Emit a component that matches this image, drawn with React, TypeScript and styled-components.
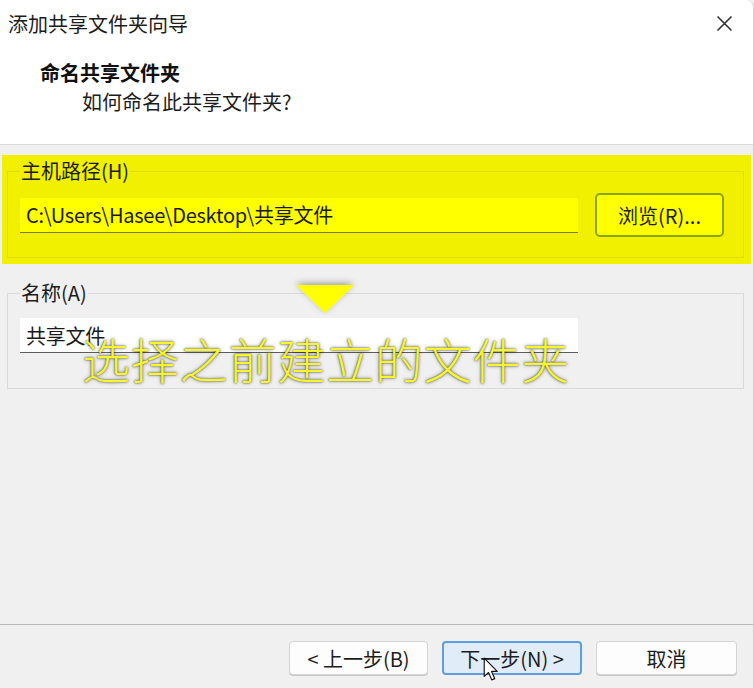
import React from "react";
import styled, { createGlobalStyle, css } from "styled-components";

const GlobalStyle = createGlobalStyle`
  html, body { margin: 0; padding: 0; background: #f0f0f0; }
  body {
    font-family: "Noto Sans CJK SC", "Noto Sans", sans-serif;
    color: #1a1a1a;
  }
  * { box-sizing: border-box; }
`;

const Window = styled.div`
  position: relative;
  width: 754px;
  height: 688px;
  display: flex;
  flex-direction: column;
  background: #f0f0f0;
  overflow: hidden;
  border-right: 1px solid #cfcfcf;
  border-top-right-radius: 8px;
`;

const Header = styled.header`
  height: 145px;
  background: #ffffff;
  border-bottom: 1px solid #dadada;
  display: flex;
  flex-direction: column;
`;

const TitleBar = styled.div`
  height: 46px;
  display: flex;
  align-items: center;
  justify-content: space-between;
  padding: 0 20px 0 8px;
  font-size: 20px;
  color: #1c1c1c;
`;

const CloseIcon = styled.svg`
  width: 17px;
  height: 17px;
  display: block;
`;

const Heading = styled.div`
  margin-top: 13px;
  padding-left: 40px;
  font-size: 20px;
  line-height: 28px;
  font-weight: 700;
  color: #111;
`;

const SubHeading = styled.div`
  margin-top: 1px;
  padding-left: 82px;
  font-size: 20px;
  line-height: 28px;
  color: #1c1c1c;
`;

const Body = styled.main`
  position: relative;
  flex: 1;
  display: flex;
  flex-direction: column;
  padding-top: 10px;
`;

const HighlightBand = styled.div`
  margin: 0 2px;
  padding: 4px 7px 6px 5px;
  background: #f0f000;
`;

const Group = styled.fieldset<{ $hl?: boolean; $bottom: number; $top: number }>`
  margin: 0;
  padding: ${(p) => p.$top}px 12px ${(p) => p.$bottom}px 12px;
  border: 1px solid ${(p) => (p.$hl ? "#dede00" : "#dadada")};
  min-width: 0;
`;

const PlainGroupWrap = styled.div`
  margin: 17px 9px 0 7px;
`;

const Legend = styled.legend`
  padding: 0 1px;
  margin-left: 0;
  font-size: 20px;
  line-height: 24px;
  color: #1c1c1c;
`;

const Row = styled.div`
  display: flex;
  align-items: center;
  gap: 17px;
`;

const TextField = styled.input<{ $hl?: boolean }>`
  width: 558px;
  height: 35px;
  padding: 0 6px;
  border: none;
  border-bottom: 1px solid ${(p) => (p.$hl ? "#7c7c30" : "#5c5c5c")};
  background: ${(p) => (p.$hl ? "#ffff00" : "#ffffff")};
  font-family: inherit;
  font-size: 20px;
  letter-spacing: -0.25px;
  color: #1a1a1a;
  outline: none;
`;

const BrowseButton = styled.button`
  width: 129px;
  height: 44px;
  border: 2px solid #8aa400;
  border-radius: 5px;
  background: #ffff00;
  font-family: inherit;
  font-size: 20px;
  color: #1c1c1c;
  padding: 0;
`;

const Footer = styled.footer`
  position: relative;
  height: 64px;
  border-top: 1px solid #b8b8b8;
  display: flex;
  justify-content: flex-end;
  align-items: flex-start;
  padding: 16px 16px 0 0;
  gap: 14px;
`;

const NavButton = styled.button<{ $w: number; $focus?: boolean }>`
  position: relative;
  width: ${(p) => p.$w}px;
  height: 34px;
  border-radius: 4px;
  font-family: inherit;
  font-size: 20px;
  color: #1c1c1c;
  padding: 0;
  border: 1px solid #d4d4d4;
  background: #fdfdfd;
  box-shadow: 0 1px 0 #c8c8c8;
  ${(p) =>
    p.$focus &&
    css`
      border: 2px solid #5c9ee0;
      background: #e0edf9;
      box-shadow: none;
    `}
`;

const Cursor = styled.svg`
  position: absolute;
  left: 39px;
  top: 14px;
  width: 15px;
  height: 24px;
`;

const Pointer = styled.svg`
  position: absolute;
  left: 294px;
  top: 138px;
  width: 62px;
  height: 32px;
  overflow: visible;
`;

const Caption = styled.div`
  position: absolute;
  left: 82px;
  top: 187px;
  font-size: 48px;
  line-height: 52px;
  letter-spacing: 0.8px;
  font-weight: 300;
  color: #f6f62a;
  white-space: nowrap;
  text-shadow: 0 0 2px rgba(0, 0, 0, 0.75), 0 0 4px rgba(0, 0, 0, 0.35);
  pointer-events: none;
`;

export default function App() {
  return (
    <>
      <GlobalStyle />
      <Window>
        <Header>
          <TitleBar>
            <span>添加共享文件夹向导</span>
            <CloseIcon viewBox="0 0 17 17">
              <path d="M1.5 1.5 L15.5 15.5 M15.5 1.5 L1.5 15.5" stroke="#333" strokeWidth="1.6" />
            </CloseIcon>
          </TitleBar>
          <Heading>命名共享文件夹</Heading>
          <SubHeading>如何命名此共享文件夹?</SubHeading>
        </Header>
        <Body>
          <HighlightBand>
            <Group $hl $top={10} $bottom={20}>
              <Legend>主机路径(H)</Legend>
              <Row>
                <TextField $hl readOnly value="C:\Users\Hasee\Desktop\共享文件" />
                <BrowseButton>浏览(R)...</BrowseButton>
              </Row>
            </Group>
          </HighlightBand>
          <PlainGroupWrap>
            <Group $top={13} $bottom={35}>
              <Legend>名称(A)</Legend>
              <TextField readOnly value="共享文件" />
            </Group>
          </PlainGroupWrap>
          <Pointer viewBox="0 0 62 32">
            <defs>
              <filter id="sh" x="-30%" y="-60%" width="160%" height="200%">
                <feDropShadow dx="0" dy="-2" stdDeviation="3" floodColor="#000" floodOpacity="0.35" />
              </filter>
            </defs>
            <polygon points="2,2 60,2 31,30" fill="#ffff00" filter="url(#sh)" />
          </Pointer>
          <Caption>选择之前建立的文件夹</Caption>
        </Body>
        <Footer>
          <NavButton $w={139}>&lt; 上一步(B)</NavButton>
          <NavButton $w={140} $focus>
            下一步(N) &gt;
            <Cursor viewBox="0 0 13 21">
              <path
                d="M1 1 V17 L4.8 13.6 L7.6 20 L10.2 18.9 L7.4 12.6 H12.4 Z"
                fill="#fff"
                stroke="#111"
                strokeWidth="1"
                strokeLinejoin="round"
              />
            </Cursor>
          </NavButton>
          <NavButton $w={141}>取消</NavButton>
        </Footer>
      </Window>
    </>
  );
}
